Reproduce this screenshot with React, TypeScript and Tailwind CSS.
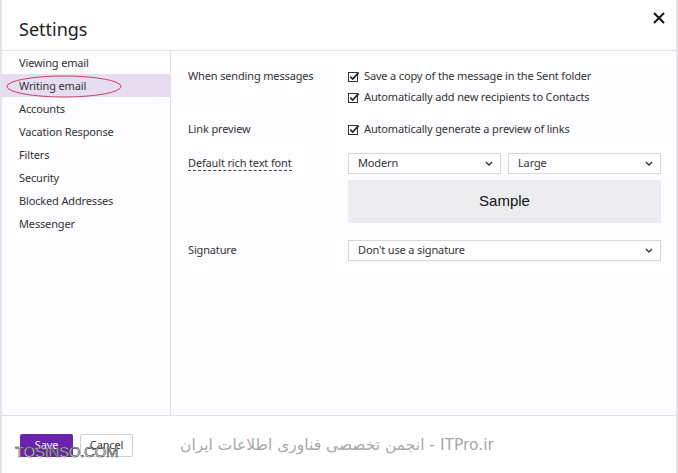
import type { ReactNode } from "react";

const navItems = [
  "Viewing email",
  "Writing email",
  "Accounts",
  "Vacation Response",
  "Filters",
  "Security",
  "Blocked Addresses",
  "Messenger",
];

const CheckIcon = () => (
  <svg width="12" height="12" viewBox="0 0 12 12" className="shrink-0">
    <rect x="0.5" y="1.5" width="9" height="9" fill="none" stroke="#333" strokeWidth="1" />
    <path d="M2.3 5.6 L4.7 8 L10.6 1.6" fill="none" stroke="#222" strokeWidth="1.6" />
  </svg>
);

const Chevron = () => (
  <svg width="8" height="5" viewBox="0 0 8 5" className="shrink-0">
    <path d="M1 1 L4 4 L7 1" fill="none" stroke="#333" strokeWidth="1.4" />
  </svg>
);

const Check = ({ children }: { children: ReactNode }) => (
  <div className="flex items-center gap-[4px] h-[21px]">
    <CheckIcon />
    <span>{children}</span>
  </div>
);

const Select = ({ value, className }: { value: string; className?: string }) => (
  <div
    className={`h-[21px] border border-[#d6d6d8] bg-white flex items-center justify-between pl-[9px] pr-[7px] ${className ?? ""}`}
  >
    <span>{value}</span>
    <Chevron />
  </div>
);

export default function App() {
  return (
    <div className="w-[678px] h-[473px] bg-[#e4e4e6] pl-[2px] pr-[2px] overflow-hidden font-['Noto_Sans',sans-serif] text-[11px] tracking-[-0.15px] text-[#333]">
      <div className="h-full bg-white flex flex-col">
        {/* Header */}
        <div className="h-[51px] shrink-0 border-b border-[#e2e2e4] flex items-start justify-between pl-[17px] pr-[10px]">
          <h1 className="text-[18px] tracking-normal text-[#222] pt-[16px] leading-[26px]">Settings</h1>
          <svg width="12" height="12" viewBox="0 0 12 12" className="mt-[12px] mr-[1px]">
            <path d="M1 1 L11 11 M11 1 L1 11" stroke="#111" strokeWidth="2" />
          </svg>
        </div>

        {/* Body */}
        <div className="flex h-[365px] shrink-0 border-b border-[#e2e2e4] bg-[#fdfcfe]">
          <div className="w-[169px] shrink-0 border-r border-[#e2e2e4]">
            {navItems.map((item, i) => (
              <div
                key={item}
                className={`relative h-[23px] flex items-center pl-[17px] pt-[1px] ${
                  i === 1 ? "bg-[#e6ddf1]" : ""
                }`}
              >
                {item}
                {i === 1 && (
                  <svg
                    width="118"
                    height="24"
                    viewBox="0 0 118 24"
                    className="absolute left-[3px] top-[1px]"
                  >
                    <ellipse cx="59" cy="11.5" rx="57" ry="10.5" fill="none" stroke="#cc3d63" strokeWidth="1" />
                  </svg>
                )}
              </div>
            ))}
          </div>

          <div className="flex-1 pl-[17px] pt-[15px] pr-[15px]">
            <div className="flex">
              <div className="w-[160px] shrink-0 h-[21px] flex items-center">When sending messages</div>
              <div>
                <Check>Save a copy of the message in the Sent folder</Check>
                <Check>Automatically add new recipients to Contacts</Check>
              </div>
            </div>

            <div className="flex mt-[11px]">
              <div className="w-[160px] shrink-0 h-[21px] flex items-center">Link preview</div>
              <Check>Automatically generate a preview of links</Check>
            </div>

            <div className="flex mt-[13px]">
              <div className="w-[160px] shrink-0 h-[21px] flex items-center">
                <span className="border-b border-dashed border-[#444] leading-[14px]">
                  Default rich text font
                </span>
              </div>
              <div className="flex-1">
                <div className="flex gap-[7px]">
                  <Select value="Modern" className="flex-1" />
                  <Select value="Large" className="flex-1" />
                </div>
                <div className="mt-[6px] h-[43px] bg-[#ededef] flex items-center justify-center font-['Liberation_Sans',sans-serif] tracking-normal text-[15px] text-[#111]">
                  Sample
                </div>
              </div>
            </div>

            <div className="flex mt-[17px]">
              <div className="w-[160px] shrink-0 h-[21px] flex items-center">Signature</div>
              <Select value="Don't use a signature" className="flex-1" />
            </div>
          </div>
        </div>

        {/* Footer */}
        <div className="relative flex-1 flex items-start pt-[18px] pl-[18px]">
          <div className="flex gap-[7px]">
            <button className="w-[53px] h-[23px] bg-[#6b22ad] text-white rounded-[2px]">Save</button>
            <button className="w-[53px] h-[23px] bg-white border border-[#cfcfd2] rounded-[2px] text-[#333]">
              Cancel
            </button>
          </div>
          <div className="absolute left-[13px] top-[25px] font-['Liberation_Sans',sans-serif] text-[15px] tracking-[-0.3px] text-white [-webkit-text-stroke:0.6px_#333]">
            TOSINSO.COM
          </div>
          <div
            dir="rtl"
            className="absolute left-[178px] top-[18px] font-['DejaVu_Sans',sans-serif] text-[15.5px] tracking-normal text-[#a9a9ab]"
          >
            ITPro.ir - انجمن تخصصی فناوری اطلاعات ایران
          </div>
        </div>
      </div>
    </div>
  );
}
